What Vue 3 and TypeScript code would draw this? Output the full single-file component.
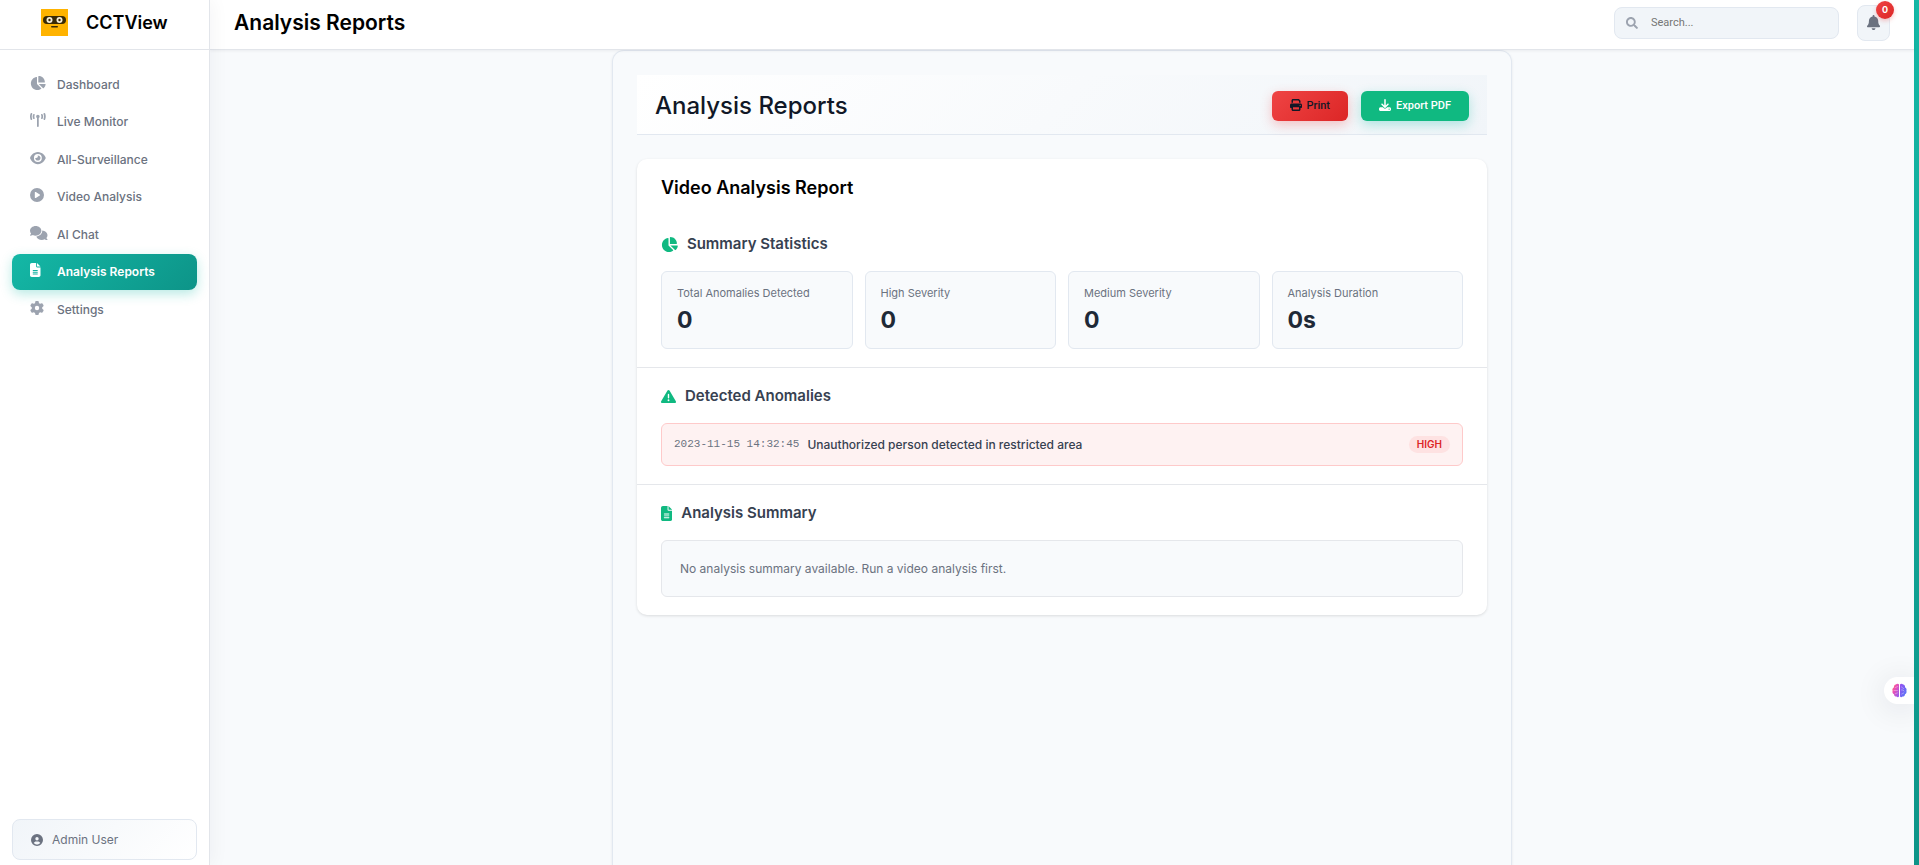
<script setup lang="ts">
import { ref } from 'vue'

interface Glyph {
  width: number
  path: string
}

interface NavItem {
  label: string
  icon: string
}

interface Stat {
  label: string
  value: string
}

const glyphs: Record<string, Glyph> = {
  pie: {
    width: 576,
    path: 'M304 240V16.6c0-9 7-16.6 16-16.6C443.7 0 544 100.3 544 224c0 9-7.6 16-16.6 16H304zM32 272C32 150.7 122.1 50.3 239 34.3c9.2-1.3 17 6.1 17 15.4V288L412.5 444.5c6.7 6.7 6.2 17.7-1.5 23.1C371.8 495.6 323.8 512 272 512C139.5 512 32 404.6 32 272zm526.4 16c9.3 0 16.6 7.8 15.4 17c-7.7 55.9-34.6 105.6-73.9 142.3c-6 5.6-15.4 5.2-21.2-.7L320 288H558.4z',
  },
  tower: {
    width: 576,
    path: 'M80.3 44C69.8 69.9 64 98.2 64 128s5.8 58.1 16.3 84c6.6 16.4-1.3 35-17.7 41.7s-35-1.3-41.7-17.7C7.4 202.6 0 166.1 0 128S7.4 53.4 20.9 20C27.6 3.6 46.2-4.3 62.6 2.3S86.9 27.6 80.3 44zM555.1 20C568.6 53.4 576 89.9 576 128s-7.4 74.6-20.9 108c-6.6 16.4-25.3 24.3-41.7 17.7S489.1 228.4 495.7 212c10.5-25.9 16.3-54.2 16.3-84s-5.8-58.1-16.3-84C489.1 27.6 497 9 513.4 2.3s35 1.3 41.7 17.7zM352 128c0 23.7-12.9 44.4-32 55.4V480c0 17.7-14.3 32-32 32s-32-14.3-32-32V183.4c-19.1-11.1-32-31.7-32-55.4c0-35.3 28.7-64 64-64s64 28.7 64 64zM170.6 76.8C163.8 92.4 160 109.7 160 128s3.8 35.6 10.6 51.2c7.1 16.2-.3 35.1-16.5 42.1s-35.1-.3-42.1-16.5c-10.3-23.6-16-49.6-16-76.8s5.7-53.2 16-76.8c7.1-16.2 25.9-23.6 42.1-16.5s23.6 25.9 16.5 42.1zM464 51.2c10.3 23.6 16 49.6 16 76.8s-5.7 53.2-16 76.8c-7.1 16.2-25.9 23.6-42.1 16.5s-23.6-25.9-16.5-42.1c6.8-15.6 10.6-32.9 10.6-51.2s-3.8-35.6-10.6-51.2c-7.1-16.2 .3-35.1 16.5-42.1s35.1 .3 42.1 16.5z',
  },
  eye: {
    width: 576,
    path: 'M288 32c-80.8 0-145.5 36.8-192.6 80.6C48.6 156 17.3 208 2.5 243.7c-3.3 7.9-3.3 16.7 0 24.6C17.3 304 48.6 356 95.4 399.4C142.5 443.2 207.2 480 288 480s145.5-36.8 192.6-80.6c46.8-43.5 78.1-95.4 93-131.1c3.3-7.9 3.3-16.7 0-24.6c-14.9-35.7-46.2-87.7-93-131.1C433.5 68.8 368.8 32 288 32zM144 256a144 144 0 1 1 288 0 144 144 0 1 1 -288 0zm144-64c0 35.3-28.7 64-64 64c-7.1 0-13.9-1.2-20.3-3.3c-5.5-1.8-11.9 1.6-11.7 7.4c.3 6.9 1.3 13.8 3.2 20.7c13.7 51.2 66.4 81.6 117.6 67.9s81.6-66.4 67.9-117.6c-11.1-41.5-47.8-69.4-88.6-71.1c-5.8-.2-9.2 6.1-7.4 11.7c2.1 6.4 3.3 13.2 3.3 20.3z',
  },
  play: {
    width: 512,
    path: 'M0 256a256 256 0 1 1 512 0A256 256 0 1 1 0 256zM188.3 147.1c-7.6 4.2-12.3 12.3-12.3 20.9V344c0 8.7 4.7 16.7 12.3 20.9s16.8 4.1 24.3-.5l144-88c7.1-4.4 11.5-12.1 11.5-20.5s-4.4-16.1-11.5-20.5l-144-88c-7.4-4.5-16.7-4.7-24.3-.5z',
  },
  comments: {
    width: 640,
    path: 'M208 352c114.9 0 208-78.8 208-176S322.9 0 208 0S0 78.8 0 176c0 38.6 14.7 74.3 39.6 103.4c-3.5 9.4-8.7 17.7-14.2 24.7c-4.8 6.2-9.7 11-13.3 14.3c-1.8 1.6-3.3 2.9-4.3 3.7c-.5 .4-.9 .7-1.1 .8l-.2 .2C1 327.2-1.4 334.4 .8 340.9S9.1 352 16 352c21.8 0 43.8-5.6 62.1-12.5c9.2-3.5 17.8-7.4 25.2-11.4C134.1 343.3 169.8 352 208 352zM448 176c0 112.3-99.1 196.9-216.5 207C255.8 457.4 336.4 512 432 512c38.2 0 73.9-8.7 104.7-23.9c7.5 4 16 7.9 25.2 11.4c18.3 6.9 40.3 12.5 62.1 12.5c6.9 0 13.1-4.5 15.2-11.1c2.1-6.6-.2-13.8-5.8-17.9l-.2-.2c-.2-.2-.6-.4-1.1-.8c-1-.8-2.5-2-4.3-3.7c-3.6-3.3-8.5-8.1-13.3-14.3c-5.5-7-10.7-15.4-14.2-24.7c24.9-29 39.6-64.7 39.6-103.4c0-92.8-84.9-168.9-192.6-175.5c.4 5.1 .6 10.3 .6 15.5z',
  },
  file: {
    width: 384,
    path: 'M64 0C28.7 0 0 28.7 0 64V448c0 35.3 28.7 64 64 64H320c35.3 0 64-28.7 64-64V160H256c-17.7 0-32-14.3-32-32V0H64zM256 0V128H384L256 0zM112 256H272c8.8 0 16 7.2 16 16s-7.2 16-16 16H112c-8.8 0-16-7.2-16-16s7.2-16 16-16zm0 64H272c8.8 0 16 7.2 16 16s-7.2 16-16 16H112c-8.8 0-16-7.2-16-16s7.2-16 16-16zm0 64H272c8.8 0 16 7.2 16 16s-7.2 16-16 16H112c-8.8 0-16-7.2-16-16s7.2-16 16-16z',
  },
  gear: {
    width: 512,
    path: 'M495.9 166.6c3.2 8.7 .5 18.4-6.4 24.6l-43.3 39.4c1.1 8.3 1.7 16.8 1.7 25.4s-.6 17.1-1.7 25.4l43.3 39.4c6.9 6.2 9.6 15.9 6.4 24.6c-4.4 11.9-9.7 23.3-15.8 34.3l-4.7 8.1c-6.6 11-14 21.4-22.1 31.2c-5.9 7.2-15.7 9.6-24.5 6.8l-55.7-17.7c-13.4 10.3-28.2 18.9-44 25.4l-12.5 57.1c-2 9.1-9 16.3-18.2 17.8c-13.8 2.3-28 3.5-42.5 3.5s-28.7-1.2-42.5-3.5c-9.2-1.5-16.2-8.7-18.2-17.8l-12.5-57.1c-15.8-6.5-30.6-15.1-44-25.4L83.1 425.9c-8.8 2.8-18.6 .3-24.5-6.8c-8.1-9.8-15.5-20.2-22.1-31.2l-4.7-8.1c-6.1-11-11.4-22.4-15.8-34.3c-3.2-8.7-.5-18.4 6.4-24.6l43.3-39.4C64.6 273.1 64 264.6 64 256s.6-17.1 1.7-25.4L22.4 191.2c-6.9-6.2-9.6-15.9-6.4-24.6c4.4-11.9 9.7-23.3 15.8-34.3l4.7-8.1c6.6-11 14-21.4 22.1-31.2c5.9-7.2 15.7-9.6 24.5-6.8l55.7 17.7c13.4-10.3 28.2-18.9 44-25.4l12.5-57.1c2-9.1 9-16.3 18.2-17.8C227.3 1.2 241.5 0 256 0s28.7 1.2 42.5 3.5c9.2 1.5 16.2 8.7 18.2 17.8l12.5 57.1c15.8 6.5 30.6 15.1 44 25.4l55.7-17.7c8.8-2.8 18.6-.3 24.5 6.8c8.1 9.8 15.5 20.2 22.1 31.2l4.7 8.1c6.1 11 11.4 22.4 15.8 34.3zM256 336a80 80 0 1 0 0-160 80 80 0 1 0 0 160z',
  },
  user: {
    width: 512,
    path: 'M399 384.2C376.9 345.8 335.4 320 288 320H224c-47.4 0-88.9 25.8-111 64.2c35.2 39.2 86.2 63.8 143 63.8s107.8-24.7 143-63.8zM0 256a256 256 0 1 1 512 0A256 256 0 1 1 0 256zm256 16a72 72 0 1 0 0-144 72 72 0 1 0 0 144z',
  },
  search: {
    width: 512,
    path: 'M505 442.7L405.3 343c-4.5-4.5-10.6-7-17-7H372c27.6-35.3 44-79.7 44-128C416 93.1 322.9 0 208 0S0 93.1 0 208s93.1 208 208 208c48.3 0 92.7-16.4 128-44v16.3c0 6.4 2.5 12.5 7 17l99.700 99.700c9.400 9.400 24.600 9.400 33.900 0l28.300-28.300c9.400-9.400 9.400-24.600.1-34zM208 336c-70.700 0-128-57.200-128-128 0-70.700 57.200-128 128-128 70.700 0 128 57.200 128 128 0 70.700-57.200 128-128 128z',
  },
  bell: {
    width: 448,
    path: 'M224 0c-17.7 0-32 14.3-32 32V51.2C119 66 64 130.6 64 208v18.8c0 47-17.3 92.4-48.5 127.6l-7.4 8.3c-8.4 9.4-10.4 22.9-5.3 34.4S19.4 416 32 416H416c12.6 0 24-7.4 29.2-18.9s3.1-25-5.3-34.4l-7.4-8.3C401.3 319.2 384 273.9 384 226.8V208c0-77.4-55-142-128-156.8V32c0-17.7-14.3-32-32-32zm45.3 493.3c12-12 18.7-28.3 18.7-45.3H224 160c0 17 6.7 33.3 18.7 45.3s28.3 18.7 45.3 18.7s33.3-6.7 45.3-18.7z',
  },
  print: {
    width: 512,
    path: 'M128 0C92.7 0 64 28.7 64 64v96h64V64H354.7L384 93.3V160h64V93.3c0-17-6.7-33.3-18.7-45.3L400 18.7C388 6.7 371.7 0 354.7 0H128zM384 352v32 64H128V384 368 352H384zm64 32h32c17.7 0 32-14.3 32-32V256c0-35.3-28.7-64-64-64H64c-35.3 0-64 28.7-64 64v96c0 17.7 14.3 32 32 32H64v64c0 35.3 28.7 64 64 64H384c35.3 0 64-28.7 64-64V384zM432 248a24 24 0 1 1 0 48 24 24 0 1 1 0-48z',
  },
  download: {
    width: 512,
    path: 'M288 32c0-17.7-14.3-32-32-32s-32 14.3-32 32V274.7l-73.4-73.4c-12.5-12.5-32.8-12.5-45.3 0s-12.5 32.8 0 45.3l128 128c12.5 12.5 32.8 12.5 45.3 0l128-128c12.5-12.5 12.5-32.8 0-45.3s-32.8-12.5-45.3 0L288 274.7V32zM64 352c-35.3 0-64 28.7-64 64v32c0 35.3 28.7 64 64 64H448c35.3 0 64-28.7 64-64V416c0-35.3-28.7-64-64-64H346.5l-45.3 45.3c-25 25-65.5 25-90.5 0L165.5 352H64zm368 56a24 24 0 1 1 0 48 24 24 0 1 1 0-48z',
  },
  warning: {
    width: 512,
    path: 'M256 32c14.2 0 27.3 7.5 34.5 19.8l216 368c7.3 12.4 7.3 27.7 .2 40.1S486.3 480 472 480H40c-14.3 0-27.6-7.7-34.7-20.1s-7-27.8 .2-40.1l216-368C228.7 39.5 241.8 32 256 32zm0 128c-13.3 0-24 10.7-24 24V296c0 13.3 10.7 24 24 24s24-10.7 24-24V184c0-13.3-10.7-24-24-24zm32 224a32 32 0 1 0 -64 0 32 32 0 1 0 64 0z',
  },
}

const box = (name: string): string => `0 0 ${glyphs[name].width} 512`

const navItems: NavItem[] = [
  { label: 'Dashboard', icon: 'pie' },
  { label: 'Live Monitor', icon: 'tower' },
  { label: 'All-Surveillance', icon: 'eye' },
  { label: 'Video Analysis', icon: 'play' },
  { label: 'AI Chat', icon: 'comments' },
  { label: 'Analysis Reports', icon: 'file' },
  { label: 'Settings', icon: 'gear' },
]

const stats: Stat[] = [
  { label: 'Total Anomalies Detected', value: '0' },
  { label: 'High Severity', value: '0' },
  { label: 'Medium Severity', value: '0' },
  { label: 'Analysis Duration', value: '0s' },
]

const current = ref('Analysis Reports')
const query = ref('')
</script>

<template>
  <div class="app">
    <aside class="sidebar">
      <div class="brand">
        <svg class="logo" viewBox="0 0 27 27" aria-hidden="true">
          <rect width="27" height="27" fill="#ffb300" />
          <rect x="2" y="7" width="23" height="8" rx="4" fill="#3a2a05" />
          <circle cx="8.5" cy="11" r="3" fill="#f4ecd8" />
          <circle cx="18.5" cy="11" r="3" fill="#f4ecd8" />
          <circle cx="8.5" cy="11" r="1.2" fill="#3a2a05" />
          <circle cx="18.5" cy="11" r="1.2" fill="#3a2a05" />
          <rect x="10" y="17" width="7" height="1.6" rx=".8" fill="#3a2a05" />
        </svg>
        <span class="brand-name">CCTView</span>
      </div>
      <nav class="nav">
        <a
          v-for="item in navItems"
          :key="item.label"
          href="#"
          class="nav-item"
          :class="{ active: item.label === current }"
          @click.prevent="current = item.label"
        >
          <span class="nav-icon">
            <svg class="glyph" :viewBox="box(item.icon)" aria-hidden="true"><path :d="glyphs[item.icon].path" /></svg>
          </span>
          <span>{{ item.label }}</span>
        </a>
      </nav>
      <button type="button" class="account">
        <svg class="glyph small" :viewBox="box('user')" aria-hidden="true"><path :d="glyphs.user.path" /></svg>
        <span>Admin User</span>
      </button>
    </aside>

    <div class="main">
      <header class="topbar">
        <h1 class="page-title">Analysis Reports</h1>
        <label class="search">
          <svg class="glyph small" :viewBox="box('search')" aria-hidden="true"><path :d="glyphs.search.path" /></svg>
          <input v-model="query" type="text" placeholder="Search..." aria-label="Search" />
        </label>
        <button type="button" class="bell" aria-label="Notifications">
          <svg class="glyph large" :viewBox="box('bell')" aria-hidden="true"><path :d="glyphs.bell.path" /></svg>
          <span class="badge">0</span>
        </button>
      </header>

      <main class="content">
        <div class="panel">
          <div class="report-bar">
            <h2 class="report-heading">Analysis Reports</h2>
            <div class="actions">
              <button type="button" class="action print">
                <svg class="glyph small" :viewBox="box('print')" aria-hidden="true"><path :d="glyphs.print.path" /></svg>
                <span>Print</span>
              </button>
              <button type="button" class="action export">
                <svg class="glyph small" :viewBox="box('download')" aria-hidden="true"><path :d="glyphs.download.path" /></svg>
                <span>Export PDF</span>
              </button>
            </div>
          </div>

          <article class="card">
            <h3 class="card-title">Video Analysis Report</h3>

            <section class="section">
              <h4 class="section-title">
                <svg class="glyph large" :viewBox="box('pie')" aria-hidden="true"><path :d="glyphs.pie.path" /></svg>
                <span>Summary Statistics</span>
              </h4>
              <div class="stats">
                <div v-for="stat in stats" :key="stat.label" class="stat">
                  <span class="stat-label">{{ stat.label }}</span>
                  <span class="stat-value">{{ stat.value }}</span>
                </div>
              </div>
            </section>

            <section class="section">
              <h4 class="section-title">
                <svg class="glyph large" :viewBox="box('warning')" aria-hidden="true"><path :d="glyphs.warning.path" /></svg>
                <span>Detected Anomalies</span>
              </h4>
              <div class="anomaly">
                <time class="stamp">2023-11-15 14:32:45</time>
                <span class="detail">Unauthorized person detected in restricted area</span>
                <span class="severity">HIGH</span>
              </div>
            </section>

            <section class="section">
              <h4 class="section-title">
                <svg class="glyph large" :viewBox="box('file')" aria-hidden="true"><path :d="glyphs.file.path" /></svg>
                <span>Analysis Summary</span>
              </h4>
              <p class="summary">No analysis summary available. Run a video analysis first.</p>
            </section>
          </article>
        </div>
      </main>
    </div>

    <div class="edge"></div>

    <button type="button" class="assistant" aria-label="Assistant">
      <svg class="brain" viewBox="0 0 15 15" aria-hidden="true">
        <defs>
          <linearGradient id="brain-left" x1="0" y1="0" x2="1" y2="1">
            <stop offset="0" stop-color="#ff8a4c" />
            <stop offset=".35" stop-color="#f04fb0" />
            <stop offset="1" stop-color="#8b5cf6" />
          </linearGradient>
          <linearGradient id="brain-right" x1="0" y1="0" x2="1" y2="1">
            <stop offset="0" stop-color="#9b4ff0" />
            <stop offset="1" stop-color="#4f7cf7" />
          </linearGradient>
        </defs>
        <path fill="url(#brain-left)" d="M7 1.6C6.6.6 4.8.3 3.9 1.6 2.5 1.7 1.7 3 2 4.2.6 5 .1 6.5.6 7.7.1 9.3.8 10.7 2 11.2 2 12.8 3.4 13.7 4.5 13.5 5.4 14.7 6.8 14.3 7 13.3z" />
        <path fill="url(#brain-right)" d="M8 1.6C8.4.6 10.2.3 11.1 1.6 12.5 1.7 13.3 3 13 4.2 14.4 5 14.9 6.5 14.4 7.7 14.9 9.3 14.2 10.7 13 11.2 13 12.8 11.6 13.7 10.5 13.5 9.6 14.7 8.2 14.3 8 13.3z" />
        <path fill="none" stroke="#fff" stroke-opacity=".5" stroke-width=".7" stroke-linecap="round" d="M3.5 4.5L5.5 3.6M2 7.5h3.5M3.3 10.7l2.2-.8M9.5 4l2 1.5M9.5 7h1.5l1 1M9.7 11l2-1" />
      </svg>
    </button>
  </div>
</template>

<style>
body {
  margin: 0;
  background: #f8fafc;
}
</style>

<style scoped>
.app {
  display: flex;
  min-height: 100vh;
  font-family: Inter, "Liberation Sans", sans-serif;
  background: #f8fafc;
  color: #000;
}

button,
input {
  font-family: inherit;
}

.glyph {
  display: block;
  flex: none;
  height: 14px;
  fill: currentColor;
}

.glyph.small {
  height: 12px;
}

.glyph.large {
  height: 15px;
}

.sidebar {
  box-sizing: border-box;
  position: sticky;
  top: 0;
  z-index: 2;
  display: flex;
  flex: none;
  flex-direction: column;
  width: 210px;
  height: 100vh;
  background: #fff;
  border-right: 1px solid #e2e5ea;
  box-shadow: 4px 0 16px rgba(15, 23, 42, 0.04);
}

.brand {
  box-sizing: border-box;
  display: flex;
  flex: none;
  align-items: center;
  gap: 18px;
  height: 50px;
  padding: 0 0 4px 41px;
  border-bottom: 1px solid #e2e5ea;
}

.logo {
  width: 27px;
  height: 27px;
}

.brand-name {
  font-size: 18px;
  font-weight: 600;
}

.nav {
  display: flex;
  flex-direction: column;
  justify-content: space-between;
  height: 261px;
  padding: 16px 12px 0;
}

.nav-item {
  box-sizing: border-box;
  display: flex;
  align-items: center;
  height: 36px;
  padding: 0 18px;
  border-radius: 8px;
  color: #6b7280;
  font-size: 12px;
  font-weight: 500;
  text-decoration: none;
}

.nav-icon {
  width: 27px;
  padding-bottom: 3px;
  color: #9ca3af;
}

.nav-item.active {
  background: linear-gradient(135deg, #14b8a6, #0d9488);
  box-shadow: 0 4px 12px rgba(20, 184, 166, 0.3);
  color: #fff;
  font-weight: 600;
}

.nav-item.active .nav-icon {
  color: #fff;
}

.account {
  display: flex;
  align-items: center;
  gap: 9px;
  height: 41px;
  box-sizing: border-box;
  margin: auto 12px 5px;
  padding: 0 18px;
  background: linear-gradient(135deg, #f1f5f9, #fff);
  border: 1px solid #e2e8f0;
  border-radius: 8px;
  color: #6b7280;
  font-size: 12px;
}

.main {
  display: flex;
  flex: 1;
  flex-direction: column;
  min-width: 0;
}

.topbar {
  box-sizing: border-box;
  position: relative;
  z-index: 1;
  display: flex;
  align-items: center;
  gap: 18px;
  height: 50px;
  padding: 0 24px 4px;
  background: #fff;
  border-bottom: 1px solid #e2e5ea;
  box-shadow: 0 1px 3px rgba(15, 23, 42, 0.06);
}

.page-title {
  margin: 0 auto 0 0;
  font-size: 21px;
  font-weight: 600;
}

.search {
  box-sizing: border-box;
  display: flex;
  align-items: center;
  gap: 13px;
  width: 225px;
  height: 32px;
  padding: 0 11px;
  background: #f1f5f9;
  border: 1px solid #e2e8f0;
  border-radius: 8px;
  color: #9ca3af;
}

.search input {
  flex: 1;
  min-width: 0;
  padding: 0;
  background: none;
  border: 0;
  outline: 0;
  color: #374151;
  font-family: Roboto, "Liberation Sans", sans-serif;
  font-size: 11px;
}

.search input::placeholder {
  color: #757575;
}

.bell {
  box-sizing: border-box;
  position: relative;
  display: flex;
  align-items: center;
  justify-content: center;
  width: 33px;
  height: 36px;
  padding: 0;
  background: #f1f5f9;
  border: 1px solid #e2e8f0;
  border-radius: 8px;
  color: #6b7280;
}

.badge {
  position: absolute;
  top: -5px;
  right: -5px;
  width: 18px;
  height: 18px;
  background: linear-gradient(135deg, #ef4444, #dc2626);
  border-radius: 50%;
  box-shadow: 0 2px 4px rgba(239, 68, 68, 0.3);
  color: #fff;
  font-size: 9px;
  font-weight: 700;
  line-height: 18px;
  text-align: center;
}

.content {
  display: flex;
  flex: 1;
  justify-content: center;
}

.panel {
  box-sizing: border-box;
  width: 100%;
  max-width: 900px;
  padding: 24px;
  background: #f8fafc;
  border: 1px solid #e2e8f0;
  border-bottom: 0;
  border-radius: 12px 12px 0 0;
  box-shadow: 0 1px 3px rgba(15, 23, 42, 0.08);
}

.report-bar {
  box-sizing: border-box;
  display: flex;
  align-items: center;
  justify-content: space-between;
  height: 60px;
  padding: 2px 18px 0;
  background: linear-gradient(135deg, #fff, #f1f5f9);
  border-bottom: 1px solid #e2e8f0;
}

.report-heading {
  margin: 0;
  color: #111827;
  font-size: 24px;
  font-weight: 500;
}

.actions {
  display: flex;
  gap: 13px;
}

.action {
  display: flex;
  align-items: center;
  gap: 5px;
  height: 30px;
  padding: 0 18px 1px;
  border: 0;
  border-radius: 6px;
  font-family: Roboto, "Liberation Sans", sans-serif;
  font-size: 11px;
  font-weight: 500;
}

.print {
  background: linear-gradient(135deg, #ef4444, #dc2626);
  box-shadow: 0 4px 12px rgba(239, 68, 68, 0.3);
  color: #111827;
}

.export {
  background: #10b981;
  box-shadow: 0 4px 12px rgba(20, 184, 166, 0.3);
  color: #fff;
}

.card {
  margin-top: 24px;
  background: #fff;
  border-radius: 10px;
  box-shadow: 0 1px 3px rgba(0, 0, 0, 0.12);
}

.card-title {
  margin: 0;
  padding: 16px 24px;
  font-size: 18px;
  font-weight: 600;
  line-height: 25px;
}

.section {
  padding: 16px 24px 18px;
}

.section + .section {
  border-top: 1px solid #e5e7eb;
}

.section-title {
  display: flex;
  align-items: center;
  gap: 9px;
  margin: 0 0 15px;
  color: #374151;
  font-size: 15px;
  font-weight: 600;
  line-height: 24px;
}

.section-title .glyph {
  color: #10b981;
}

.stats {
  display: grid;
  grid-template-columns: repeat(4, 1fr);
  gap: 12px;
}

.stat {
  display: flex;
  flex-direction: column;
  gap: 4px;
  padding: 12px 15px 14px;
  background: #f8fafc;
  border: 1px solid #e2e8f0;
  border-radius: 6px;
}

.stat-label {
  color: #6b7280;
  font-size: 11px;
  line-height: 18px;
}

.stat-value {
  color: #1f2937;
  font-size: 23px;
  font-weight: 700;
  line-height: 28px;
}

.anomaly {
  display: flex;
  align-items: center;
  gap: 8px;
  padding: 12px;
  background: #fef2f2;
  border: 1px solid #fecaca;
  border-radius: 6px;
}

.stamp {
  padding-bottom: 2px;
  color: #6b7280;
  font-family: "Liberation Mono", monospace;
  font-size: 11px;
}

.detail {
  flex: 1;
  color: #374151;
  font-size: 12px;
  font-weight: 500;
  line-height: 17px;
}

.severity {
  padding: 0 8px;
  background: #fee2e2;
  border-radius: 9px;
  color: #dc2626;
  font-size: 10px;
  font-weight: 600;
  line-height: 17px;
}

.summary {
  margin: 0;
  padding: 18px;
  background: #f8fafc;
  border: 1px solid #e5e7eb;
  border-radius: 6px;
  color: #6b7280;
  font-size: 12px;
  line-height: 19px;
}

.edge {
  flex: none;
  width: 5px;
  background: linear-gradient(#14b8a6, #0d9488);
}

.assistant {
  position: fixed;
  top: 677px;
  right: 5px;
  z-index: 3;
  display: flex;
  align-items: center;
  width: 30px;
  height: 27px;
  padding: 0 8px;
  background: #fff;
  border: 0;
  border-radius: 14px 0 0 14px;
  box-shadow: 0 4px 32px rgba(15, 23, 42, 0.12);
  clip-path: inset(-50px 0 -50px -50px);
}

.brain {
  flex: none;
  width: 15px;
  height: 15px;
}
</style>
